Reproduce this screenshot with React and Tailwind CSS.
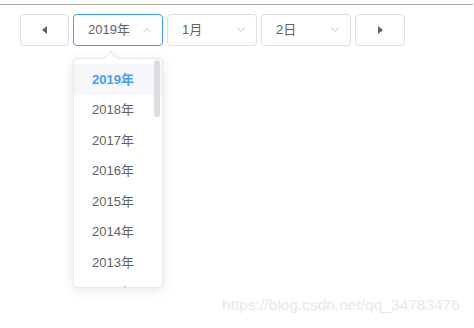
import { useState } from 'react';

const years = [2019, 2018, 2017, 2016, 2015, 2014, 2013, 2012];

const Chevron = ({ up }) => (
  <svg width="10" height="6" viewBox="0 0 10 6" className="text-[#c0c4cc]">
    <path
      d={up ? 'M1 5.5L5 1.5L9 5.5' : 'M1 0.5L5 4.5L9 0.5'}
      fill="none"
      stroke="currentColor"
      strokeWidth="1"
    />
  </svg>
);

const Caret = ({ dir }) => (
  <svg width="5" height="8" viewBox="0 0 5 8">
    <path d={dir === 'left' ? 'M5 0L0 4L5 8Z' : 'M0 0L5 4L0 8Z'} fill="#606266" />
  </svg>
);

const SelectBox = ({ label, active }) => (
  <div
    className={`w-[90px] h-[32px] rounded-[4px] border flex items-center justify-between pl-[14px] pr-[10px] ${
      active ? 'border-[#409eff]' : 'border-[#dcdfe6]'
    }`}
  >
    <span className="text-[13px] text-[#606266]">{label}</span>
    <Chevron up={active} />
  </div>
);

const App = () => {
  const [selected] = useState(2019);

  return (
    <div
      className="relative w-[474px] h-[328px] bg-white overflow-hidden"
      style={{ fontFamily: '"Liberation Sans", "Noto Sans CJK SC", sans-serif' }}
    >
      {/* top rule */}
      <div className="mt-[4px] h-px w-[473px] bg-[#a9a9a9]" />

      {/* date controls */}
      <div className="flex gap-[4px] pl-[20px] mt-[9px]">
        <button className="w-[49px] h-[32px] rounded-[4px] border border-[#dcdfe6] flex items-center justify-center">
          <Caret dir="left" />
        </button>
        <div className="relative">
          <SelectBox label="2019年" active />

          {/* year dropdown */}
          <div className="absolute left-0 top-[44px] w-[90px] h-[230px] bg-white border border-[#e4e7ed] rounded-[4px] shadow-[0_2px_12px_rgba(0,0,0,0.1)] z-10">
            <div className="absolute -top-[6px] left-[32px] w-[10px] h-[10px] bg-white border-t border-l border-[#e4e7ed] rotate-45" />
            <div className="relative h-full overflow-hidden pt-[5px]">
              {years.map((y) => (
                <div
                  key={y}
                  className={`h-[30.5px] flex items-center pl-[18px] text-[13px] ${
                    y === selected
                      ? 'bg-[#f5f7fa] text-[#409eff] font-bold'
                      : 'text-[#606266]'
                  }`}
                >
                  {y}年
                </div>
              ))}
              <div className="absolute right-[2px] top-[1px] w-[6px] h-[57px] rounded-[3px] bg-[#dddee0]" />
            </div>
          </div>
        </div>
        <SelectBox label="1月" />
        <SelectBox label="2日" />
        <button className="w-[50px] h-[32px] rounded-[4px] border border-[#dcdfe6] flex items-center justify-center">
          <Caret dir="right" />
        </button>
      </div>

      {/* watermark */}
      <div className="absolute left-[222px] top-[293px] text-[15.5px] text-[#e8e8e8]">
        https://blog.csdn.net/qq_34783476
      </div>
    </div>
  );
};

export default App;
